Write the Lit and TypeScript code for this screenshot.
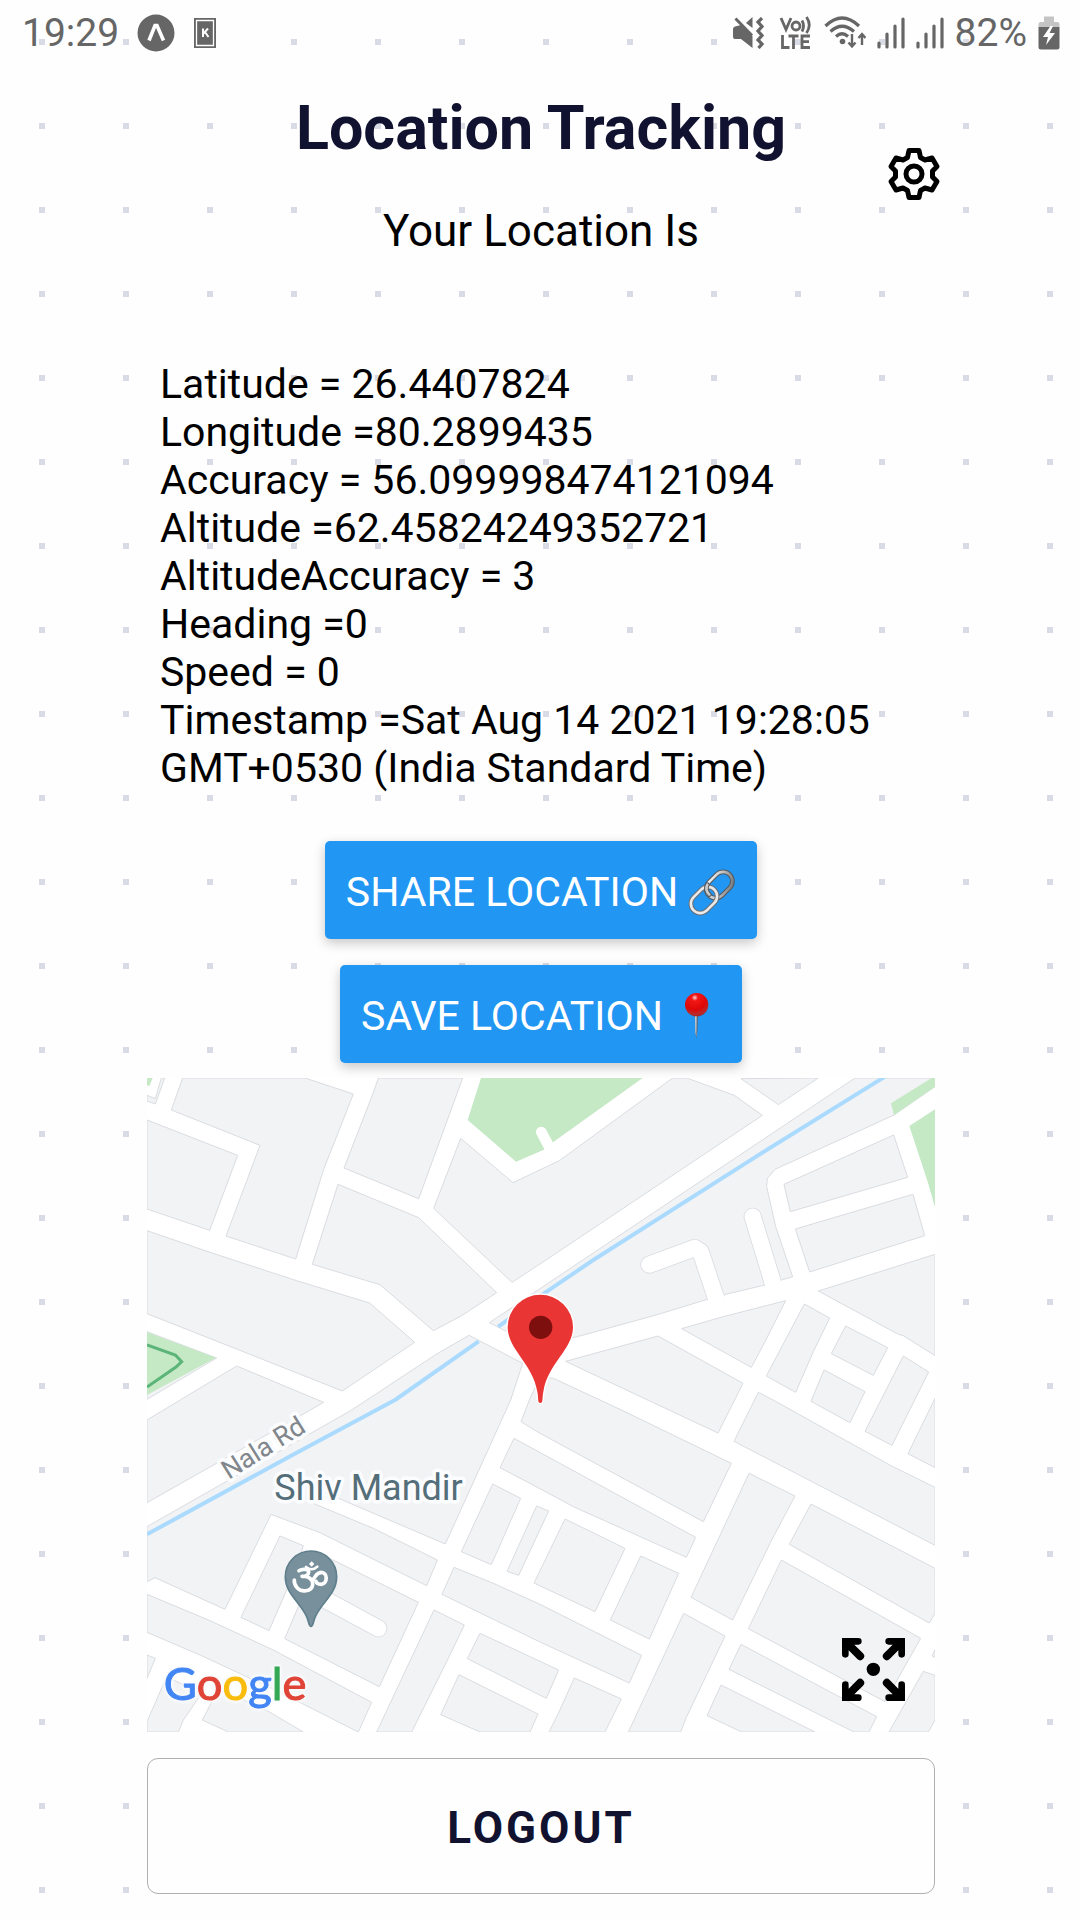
import { LitElement, html, css, svg } from "lit";
import { customElement, property } from "lit/decorators.js";

/** City blocks of the map, as polygon points. */
const BLOCKS: string[] = [
  "21,93 46,102 74,24 64,24 46,86 21,76",
  "128,24 495,24 640,72 551,298 467,567 258,498 360,226 94,120",
  "21,150 293,256 209,481 21,417",
  "715,24 968,24 836,386 612,294 700,68",
  "962,205 1119,338 1258,272 1598,24 1640,24 1783,76 1867,136 1200,582 1116,637 881,415",
  "594,343 836,443 1070,668 965,737 880,782 720,644 517,583",
  "21,482 210,547 470,632 689,699 824,817 607,963 292,838 21,731",
  "21,785 230,864 21,988",
  "290,888 551,997 450,1055 21,1298 21,1050",
  "21,1370 635,1020 890,852 987,796 1148,880 1112,990 916,1422 600,1287 530,1260 520,1300 700,1375 892,1470 860,1547 540,1388 393,1333 255,1618 45,1523 21,1535",
  "1048,758 1200,656 2145,24 2385,24 2385,50 2262,135 1905,298 1882,325 1880,350 1907,470 1958,620 1925,630 1875,645 1753,674 1702,688 1545,736 1305,802 1150,810",
  "1803,26 2035,24 1915,104",
  "1932,343 2261,195 2303,322 1951,425",
  "1966,477 2319,373 2354,497 2009,606",
  "2035,663 2385,553 2385,857 2290,797 2275,793",
  "1625,776 1750,740 1937,692 1875,815 1834,892",
  "1993,702 2069,744 2020,845 1967,967 1879,918",
  "2117,768 2243,833 2200,916 2074,851",
  "2052,900 2175,965 2130,1058 2013,994",
  "2290,858 2366,906 2256,1126 2175,1084",
  "2385,985 2304,1151 2385,1193",
  "1277,874 1554,798 1809,940 1734,1089 1525,991",
  "1855,967 1905,993 2120,1113 2255,1188 2385,1252 2385,1426 1782,1114",
  "1143,1055 1170,985 1200,920 1240,925 1440,1018 1774,1180 1690,1355 1200,1090",
  "1122,1105 1667,1402 1639,1462 1300,1310 1200,1256 1080,1193",
  "1058,1242 1142,1285 1054,1484 964,1445",
  "1190,1308 1226,1323 1136,1516 1101,1504",
  "1275,1347 1455,1435 1365,1625 1182,1539",
  "1502,1458 1616,1510 1528,1707 1411,1650",
  "1827,1210 1965,1278 1890,1420 1778,1650 1653,1582",
  "2013,1302 2385,1495 2385,1630 2368,1659 1948,1423",
  "1924,1470 2342,1705 2235,1895 1825,1676",
  "2385,1738 2376,1758 2385,1762",
  "2350,1804 2385,1816 2385,1950 2365,1986 2247,1986",
  "1803,1723 2210,1940 2187,1986 2142,1986 1767,1798",
  "1743,1845 2025,1986 1805,1986 1701,1937",
  "1631,1630 1755,1698 1640,1940 1622,1986 1465,1986",
  "942,1492 1060,1540 1200,1603 1505,1756 1468,1839 1200,1716 906,1573",
  "882,1620 973,1665 920,1775 815,1986 710,1986",
  "1020,1690 1256,1800 1219,1885 982,1766",
  "957,1814 1194,1932 1170,1986 1020,1986 902,1934",
  "1303,1824 1444,1887 1395,1986 1227,1986 1255,1930",
  "21,1573 210,1652 400,1740 695,1897 655,1986 410,1862 180,1755 21,1687",
  "235,1858 370,1915 490,1986 265,1986 187,1950",
  "21,1755 46,1765 21,1825",
  "21,1955 80,1820 185,1870 130,1950 115,1986 21,1986",
  "420,1398 490,1427 480,1460 440,1560 387,1682 303,1642",
  "545,1455 585,1473 835,1597 718,1850 434,1706 475,1610",
];

const PARKS: string[] = [
  "21,24 38,24 28,48 21,46",
  "1023,24 1508,24 1240,216 1215,238 1128,275 983,150",
  "21,787 228,863 21,975",
  "2253,100 2375,24 2385,24 2385,50 2262,135",
  "2308,168 2385,118 2385,412 2363,335",
];

/** Dead-end lanes that run into the blocks. */
const LANES: string[] = [
  "M1838 440L1896 630",
  "M1528 584L1664 534L1682 546L1728 684",
  "M530 1575L715 1675",
];

@customElement("location-map")
export class LocationMap extends LitElement {
  static styles = css`
    :host {
      display: block;
      position: relative;
    }
    .map {
      display: block;
      width: 100%;
      height: auto;
    }
    .block {
      fill: #f1f3f5;
      stroke: #dadce0;
      stroke-width: 3;
    }
    .park {
      fill: #c5e8c5;
    }
    .lane-edge,
    .lane,
    .river,
    .trail {
      fill: none;
      stroke-linecap: round;
      stroke-linejoin: round;
    }
    .lane-edge {
      stroke: #dadce0;
      stroke-width: 54;
    }
    .lane {
      stroke: #fff;
      stroke-width: 49;
    }
    .river {
      stroke: #abdaff;
      stroke-width: 12;
      stroke-linecap: butt;
    }
    .trail {
      stroke: #5bb478;
      stroke-width: 9;
      stroke-linecap: butt;
      stroke-linejoin: miter;
    }
    .label {
      font-family: Roboto, sans-serif;
      paint-order: stroke;
      stroke: #fbfcfd;
      stroke-width: 22;
      stroke-linejoin: round;
    }
    .road-name {
      font-size: 80px;
      fill: #80868b;
    }
    .place-name {
      font-size: 108px;
      fill: #546e7a;
    }
    .brand {
      font-family: Lato, sans-serif;
      font-size: 136px;
      font-weight: 400;
      stroke-width: 3px;
      filter: drop-shadow(0 0 5px #fafbfc) drop-shadow(0 0 5px #fafbfc) drop-shadow(0 0 5px #fafbfc);
    }
    .brand-blue {
      fill: #4285f4;
      stroke: #4285f4;
    }
    .brand-red {
      fill: #e04437;
      stroke: #e04437;
    }
    .brand-yellow {
      fill: #f9bc0d;
      stroke: #f9bc0d;
    }
    .brand-green {
      fill: #34a853;
      stroke: #34a853;
    }
    .expand {
      position: absolute;
      right: 30px;
      bottom: 31px;
      padding: 0;
      border: 0;
      background: none;
      line-height: 0;
      cursor: pointer;
    }
    .expand-icon {
      width: 63px;
      height: 63px;
    }
  `;

  render() {
    return html`
      <svg class="map" viewBox="21 24 2364 1962" role="img" aria-label="Map">
        <rect x="21" y="24" width="2364" height="1962" fill="#fff"></rect>
        ${BLOCKS.map((p) => svg`<polygon class="block" points=${p}></polygon>`)}
        ${PARKS.map((p) => svg`<polygon class="park" points=${p}></polygon>`)}
        <path d="M1204 186L1228 232" fill="none" stroke="#fff" stroke-width="32" stroke-linecap="round"></path>
        ${LANES.map((d) => svg`<path class="lane-edge" d=${d}></path>`)}
        ${LANES.map((d) => svg`<path class="lane" d=${d}></path>`)}
        <path class="lane" d="M1896 630L1906 665M1728 684L1734 705M1700 717L1950 658"></path>
        <path class="river" d="M21 1393L470 1148L765 990L1016 814"></path>
        <path class="river" d="M1075 770L1220 665L1360 570L1840 265L2235 20"></path>
        <path class="trail" d="M21 825L106 855L125 875L108 891L21 951"></path>

        <text class="label road-name" transform="translate(266 1230) rotate(-32)">Nala Rd</text>
        <text class="label place-name" x="403" y="1289">Shiv Mandir</text>

        <g>
          <path
            d="M513 1669C506 1669 507 1655 500 1640C480 1595 436 1572 436 1520A77 77 0 0 1 590 1520C590 1572 546 1595 526 1640C519 1655 520 1669 513 1669Z"
            fill="#78909c" stroke="#5f7f8c" stroke-width="5"></path>
          <g fill="none" stroke="#fff" stroke-width="11" stroke-linecap="round" stroke-linejoin="round">
            <path d="M477 1502C486 1496 507 1496 506 1507C505 1516 494 1519 486 1519C504 1517 520 1528 518 1544C515 1566 484 1568 471 1553C465 1546 462 1538 463 1530"></path>
            <path d="M516 1530C526 1526 526 1508 544 1507C563 1507 564 1541 544 1543C534 1543 529 1538 528 1534"></path>
            <path d="M498 1491C508 1500 522 1500 532 1490" stroke-width="8"></path>
          </g>
          <path d="M515 1474L523 1482L515 1490L507 1482Z" fill="#fff"></path>
        </g>

        <path
          d="M1201 999C1192 999 1196 985 1192 965C1178 880 1103 838 1103 772A98 98 0 0 1 1299 772C1299 838 1224 880 1210 965C1206 985 1210 999 1201 999Z"
          fill="#ea3535" stroke="#fff" stroke-width="8" paint-order="stroke"></path>
        <circle cx="1202" cy="772" r="35" fill="#7e0f0f"></circle>

        <text class="brand" x="71" y="1891"><tspan class="brand-blue">G</tspan><tspan class="brand-red">o</tspan><tspan class="brand-yellow">o</tspan><tspan class="brand-blue">g</tspan><tspan class="brand-green">l</tspan><tspan class="brand-red">e</tspan></text>
      </svg>
      <button class="expand" aria-label="Full screen">
        <svg class="expand-icon" viewBox="0 0 189 189">
          ${[
            "",
            "translate(189 0) rotate(90)",
            "translate(189 189) rotate(180)",
            "translate(0 189) rotate(270)",
          ].map(
            (t) => svg`<path
              transform=${t}
              d="M0 0H49A9 9 0 0 1 49 20H37L63 46A10 10 0 0 1 46 63L20 37V49A10 10 0 0 1 0 49Z"></path>`
          )}
          <circle cx="94" cy="94" r="20"></circle>
        </svg>
      </button>
    `;
  }
}

@customElement("status-bar")
export class StatusBar extends LitElement {
  static styles = css`
    :host {
      display: flex;
      align-items: center;
      justify-content: space-between;
      height: 66px;
      padding: 0 20px 0 22px;
      color: #666;
      font-family: Roboto, sans-serif;
      font-size: 39px;
      line-height: 66px;
    }
    .side {
      display: flex;
      align-items: center;
    }
    .left {
      gap: 18px;
    }
    .right {
      gap: 11px;
    }
    .icon {
      display: block;
      flex: none;
      fill: currentColor;
    }
    .line {
      fill: none;
      stroke: currentColor;
    }
  `;

  render() {
    return html`
      <div class="side left">
        <span>19:29</span>
        <svg class="icon" width="38" height="38" viewBox="0 0 38 38">
          <circle cx="19" cy="19" r="18.500"></circle>
          <path d="M12 26.500L18 11.500H20L26.500 26.500" fill="none" stroke="#fff" stroke-width="3.600"></path>
        </svg>
        <svg class="icon" width="24" height="32" viewBox="0 0 24 32">
          <path d="M1 1H23V31H1Z"></path>
          <path d="M3.500 3.500H20.500V28.500H3.500Z" fill="none" stroke="#fff" stroke-width="1.300"></path>
          <path d="M10 11.500V20M15 11.500L10.500 16.500M12 15L15.500 20" fill="none" stroke="#fff" stroke-width="2"></path>
        </svg>
      </div>
      <div class="side right">
        <svg class="icon" width="36" height="32" viewBox="0 0 36 32">
          <path d="M1 12Q1 10 3 9.500L9 8L20.500 19V31L9 22H3Q1 22 1 20Z"></path>
          <path d="M14 6L20.500 0V11Z"></path>
          <path class="line" d="M3.500 1.500L20 18.500" stroke-width="3"></path>
          <path class="line" d="M30 1L26 5L30 9.500L26 14L30 18.500L26 23L30 27L26.500 31" stroke-width="3.200"></path>
        </svg>
        <svg class="icon" width="34" height="34" viewBox="0 0 34 34">
          <g class="line" stroke-width="2.800">
            <path d="M2 2L7 13.500L12 2"></path>
            <circle cx="17" cy="10" r="4"></circle>
            <path d="M23 4.500Q26 10 23 15.500M27.500 1Q33 9 27.500 17"></path>
            <path d="M3.500 19V31.500H10.500M9.500 20H19.500M14.500 20V33M31 20H23V31.500H31M23 25.700H30"></path>
          </g>
        </svg>
        <svg class="icon" width="42" height="34" viewBox="0 0 42 34">
          <g class="line" stroke-width="3.200">
            <path d="M1.500 10Q18 -6 35 10M6.500 15.500Q18 5 30 15.500M12 20.500Q18 15 24 20.500"></path>
            <path d="M28 18V30M24.500 26.500L28 30.500L31.500 26.500M38 29V19M34.500 22L38 18L41.500 22" stroke-width="2.400"></path>
          </g>
          <circle cx="18.500" cy="25.500" r="2.800"></circle>
        </svg>
        <svg class="icon" width="28" height="32" viewBox="0 0 28 32">
          <path class="line" d="M2 26V30M10 17V30M18 9V30M26 2V30" stroke-width="3.200" stroke-linecap="round"></path>
        </svg>
        <svg class="icon" width="28" height="32" viewBox="0 0 28 32">
          <path class="line" d="M2 26V30M10 17V30M18 9V30M26 2V30" stroke-width="3.200" stroke-linecap="round"></path>
        </svg>
        <span>82%</span>
        <svg class="icon" width="22" height="34" viewBox="0 0 22 34">
          <path d="M6 0.500H16V6H19Q21.500 6 21.500 8V11H0.500V8Q0.500 6 3 6H6Z" fill="#c4c4c4"></path>
          <path d="M0.500 11H21.500V31Q21.500 33.500 19 33.500H3Q0.500 33.500 0.500 31Z"></path>
          <path d="M12.500 10L5 21H10L8 29L17 17H11.500L15 10Z" fill="#fff"></path>
        </svg>
      </div>
    `;
  }
}

@customElement("action-button")
export class ActionButton extends LitElement {
  @property() label = "";
  @property() symbol = "link";

  static styles = css`
    .action {
      display: flex;
      align-items: center;
      gap: 8px;
      height: 98px;
      padding: 4px 21px 0;
      border: 0;
      border-radius: 5px;
      background: #2196f3;
      color: #fff;
      font-family: Roboto, sans-serif;
      font-size: 41px;
      line-height: 48px;
      box-shadow: 0 4px 12px rgba(0, 0, 0, 0.22);
      cursor: pointer;
    }
    .emoji {
      width: 50px;
      height: 48px;
    }
  `;

  private link() {
    return html`
      <svg class="emoji" viewBox="0 0 150 144" aria-hidden="true">
        <defs>
          <linearGradient id="steel" x1="0" y1="0" x2="1" y2="1">
            <stop offset="0" stop-color="#fff"></stop>
            <stop offset="0.500" stop-color="#c4c6c8"></stop>
            <stop offset="1" stop-color="#6b6e72"></stop>
          </linearGradient>
        </defs>
        <g fill="none" stroke-linecap="round">
          <rect x="56" y="23" width="88" height="56" rx="28" transform="rotate(-45 100 51)" stroke="#54575b" stroke-width="14"></rect>
          <rect x="56" y="23" width="88" height="56" rx="28" transform="rotate(-45 100 51)" stroke="url(#steel)" stroke-width="8"></rect>
          <rect x="10" y="68" width="88" height="56" rx="28" transform="rotate(-45 54 96)" stroke="#6b6e72" stroke-width="14"></rect>
          <rect x="10" y="68" width="88" height="56" rx="28" transform="rotate(-45 54 96)" stroke="#e9eaeb" stroke-width="8"></rect>
          <path d="M64 50Q56 66 70 80" stroke="#54575b" stroke-width="14"></path>
          <path d="M64 50Q56 66 70 80" stroke="#c9cbcd" stroke-width="8"></path>
        </g>
      </svg>
    `;
  }

  private pin() {
    return html`
      <svg class="emoji" viewBox="0 0 150 144" aria-hidden="true">
        <defs>
          <radialGradient id="head" cx="0.420" cy="0.200" r="0.850">
            <stop offset="0" stop-color="#ffd9d9"></stop>
            <stop offset="0.160" stop-color="#f21818"></stop>
            <stop offset="0.600" stop-color="#de0606"></stop>
            <stop offset="0.850" stop-color="#b82a2a"></stop>
            <stop offset="1" stop-color="#a01818"></stop>
          </radialGradient>
        </defs>
        <path d="M71 66H81L79 120L76 140L73 120Z" fill="#56616c"></path>
        <path d="M72 66H77L76 136L73 120Z" fill="#c9d3dc"></path>
        <circle cx="77" cy="38" r="35" fill="url(#head)"></circle>
      </svg>
    `;
  }

  render() {
    return html`
      <button class="action">
        <span>${this.label}</span>
        ${this.symbol === "pin" ? this.pin() : this.link()}
      </button>
    `;
  }
}

@customElement("app-root")
export class AppRoot extends LitElement {
  static styles = css`
    :host {
      display: block;
      min-height: 100vh;
      background-color: #fefefe;
      background-image: conic-gradient(from 0deg at 6px 6px, transparent 75%, #dadce5 0);
      background-size: 84px 84px;
      background-position: 39px 39px;
      font-family: Roboto, sans-serif;
      color: #000;
    }
    .screen {
      display: flex;
      flex-direction: column;
      padding: 0 145px 26px 147px;
    }
    .header {
      display: grid;
      grid-template-columns: 1fr auto 1fr;
      justify-items: center;
      row-gap: 39px;
      padding-top: 26px;
    }
    .title {
      grid-column: 2;
      margin: 0;
      font-size: 61px;
      font-weight: 700;
      line-height: 72px;
      color: #11122f;
    }
    .subtitle {
      grid-column: 2;
      margin: 0;
      font-size: 44px;
      line-height: 56px;
    }
    .settings {
      grid-column: 3;
      grid-row: 1 / 3;
      place-self: center end;
      margin: 0 -6px 4px 0;
      padding: 0;
      border: 0;
      background: none;
      line-height: 0;
      cursor: pointer;
    }
    .gear {
      width: 54px;
      height: 54px;
    }
    .readings {
      margin: 0;
      padding: 101px 13px 49px;
      list-style: none;
      font-size: 41px;
      line-height: 48px;
    }
    .actions {
      display: flex;
      flex-direction: column;
      align-items: center;
      gap: 26px;
    }
    .place {
      margin: 15px 0 26px;
    }
    .logout {
      height: 136px;
      padding: 4px 0 0;
      border: 1px solid #b0b0b0;
      border-radius: 11px;
      background: #fefefe;
      color: #11122f;
      font-family: inherit;
      font-size: 44px;
      font-weight: 700;
      letter-spacing: 3px;
      cursor: pointer;
    }
  `;

  private readings = [
    "Latitude = 26.4407824",
    "Longitude =80.2899435",
    "Accuracy = 56.099998474121094",
    "Altitude =62.45824249352721",
    "AltitudeAccuracy = 3",
    "Heading =0",
    "Speed = 0",
    "Timestamp =Sat Aug 14 2021 19:28:05 GMT+0530 (India Standard Time)",
  ];

  render() {
    return html`
      <status-bar></status-bar>
      <main class="screen">
        <header class="header">
          <h1 class="title">Location Tracking</h1>
          <p class="subtitle">Your Location Is</p>
          <button class="settings" aria-label="Settings">
            <svg class="gear" viewBox="0 0 54 54" fill="none" stroke="#000" stroke-width="5" stroke-linejoin="round">
              <path
                d="M22 3.500H32L33.500 10.500L38 13L45 11L50 19.500L45.500 24V30L50 34.500L45 43L38 41L33.500 43.500L32 50.500H22L20.500 43.500L16 41L9 43L4 34.500L8.500 30V24L4 19.500L9 11L16 13L20.500 10.500Z"></path>
              <circle cx="27" cy="27" r="8"></circle>
            </svg>
          </button>
        </header>
        <ul class="readings">
          ${this.readings.map((r) => html`<li>${r}</li>`)}
        </ul>
        <div class="actions">
          <action-button label="SHARE LOCATION" symbol="link"></action-button>
          <action-button label="SAVE LOCATION" symbol="pin"></action-button>
        </div>
        <location-map class="place"></location-map>
        <button class="logout">LOGOUT</button>
      </main>
    `;
  }
}
